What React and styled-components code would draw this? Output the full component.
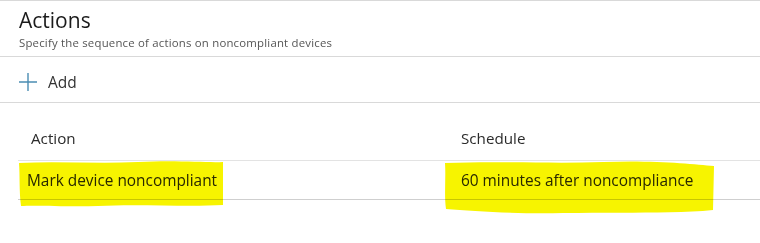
import React from "react";
import styled, { createGlobalStyle } from "styled-components";

const Global = createGlobalStyle`
  html, body { margin: 0; padding: 0; background: #ffffff; }
  body { font-family: "Open Sans", "Noto Sans", sans-serif; color: #252423; }
`;

const Page = styled.div`
  width: 760px;
  height: 243px;
  overflow: hidden;
  background: #fff;
`;

const Header = styled.header`
  border-top: 1px solid #d9d9d9;
  border-bottom: 1px solid #d9d9d9;
  padding: 5px 0 6px 19px;
`;

const Title = styled.h1`
  margin: 0;
  font-size: 21px;
  line-height: 28px;
  font-weight: 400;
  color: #1b1b1b;
`;

const Subtitle = styled.p`
  margin: 2px 0 0;
  font-size: 11.4px;
  line-height: 14px;
  letter-spacing: 0.2px;
  color: #555;
`;

const Toolbar = styled.div`
  border-bottom: 1px solid #d9d9d9;
  padding: 15px 0 10px 18px;
  display: flex;
`;

const ToolButton = styled.button`
  display: flex;
  align-items: center;
  gap: 10px;
  border: 0;
  background: none;
  padding: 0;
  font-family: inherit;
  font-size: 15.5px;
  line-height: 20px;
  color: #333;
  cursor: pointer;
`;

const Table = styled.div`
  position: relative;
  margin-left: 18px;
`;

const Row = styled.div`
  display: grid;
  grid-template-columns: 434px 1fr;
  border-bottom: 1px solid ${(p) => (p.$head ? "#e3e3e3" : "#cfcfcf")};
  padding: ${(p) => (p.$head ? "25px 0 12px" : "10px 0 8px")};
  position: relative;
  z-index: 1;
`;

const Cell = styled.div`
  font-size: ${(p) => (p.$head ? "15.2px" : "15.4px")};
  line-height: 20px;
  padding-left: ${(p) => p.$pad}px;
  color: ${(p) => (p.$head ? "#2b2b2b" : "#2a2a2a")};
  font-weight: ${(p) => (p.$head ? 500 : 400)};
`;

const Marker = styled.svg`
  position: absolute;
  z-index: 2;
  mix-blend-mode: multiply;
  pointer-events: none;
`;

function PlusIcon() {
  return (
    <svg width="20" height="20" viewBox="0 0 20 20">
      <path d="M10 1v18M1 10h18" stroke="#4b8db3" strokeWidth="1.4" fill="none" />
    </svg>
  );
}

export default function App() {
  return (
    <Page>
      <Global />
      <Header>
        <Title>Actions</Title>
        <Subtitle>Specify the sequence of actions on noncompliant devices</Subtitle>
      </Header>
      <Toolbar>
        <ToolButton>
          <PlusIcon />
          Add
        </ToolButton>
      </Toolbar>
      <Table>
        <Row $head>
          <Cell $head $pad={13}>Action</Cell>
          <Cell $head $pad={9}>Schedule</Cell>
        </Row>
        <Row>
          <Cell $pad={9}>Mark device noncompliant</Cell>
          <Cell $pad={9}>60 minutes after noncompliance</Cell>
        </Row>
        <Marker style={{ left: 0, top: 57 }} width="206" height="48" viewBox="0 0 206 48">
          <path
            d="M1 3 C40 1 80 4 120 2 C160 0 190 3 205 2 L205 45 C170 47 120 44 80 46 C50 47 20 45 3 46 C1 30 2 15 1 3 Z"
            fill="#f7f400"
          />
        </Marker>
        <Marker style={{ left: 425, top: 57 }} width="272" height="56" viewBox="0 0 272 56">
          <path
            d="M2 3 C60 1 110 4 160 2 C210 0 250 4 271 6 L270 50 C230 54 180 52 120 53 C70 54 30 51 3 49 C1 35 3 18 2 3 Z"
            fill="#f7f400"
          />
        </Marker>
      </Table>
    </Page>
  );
}
